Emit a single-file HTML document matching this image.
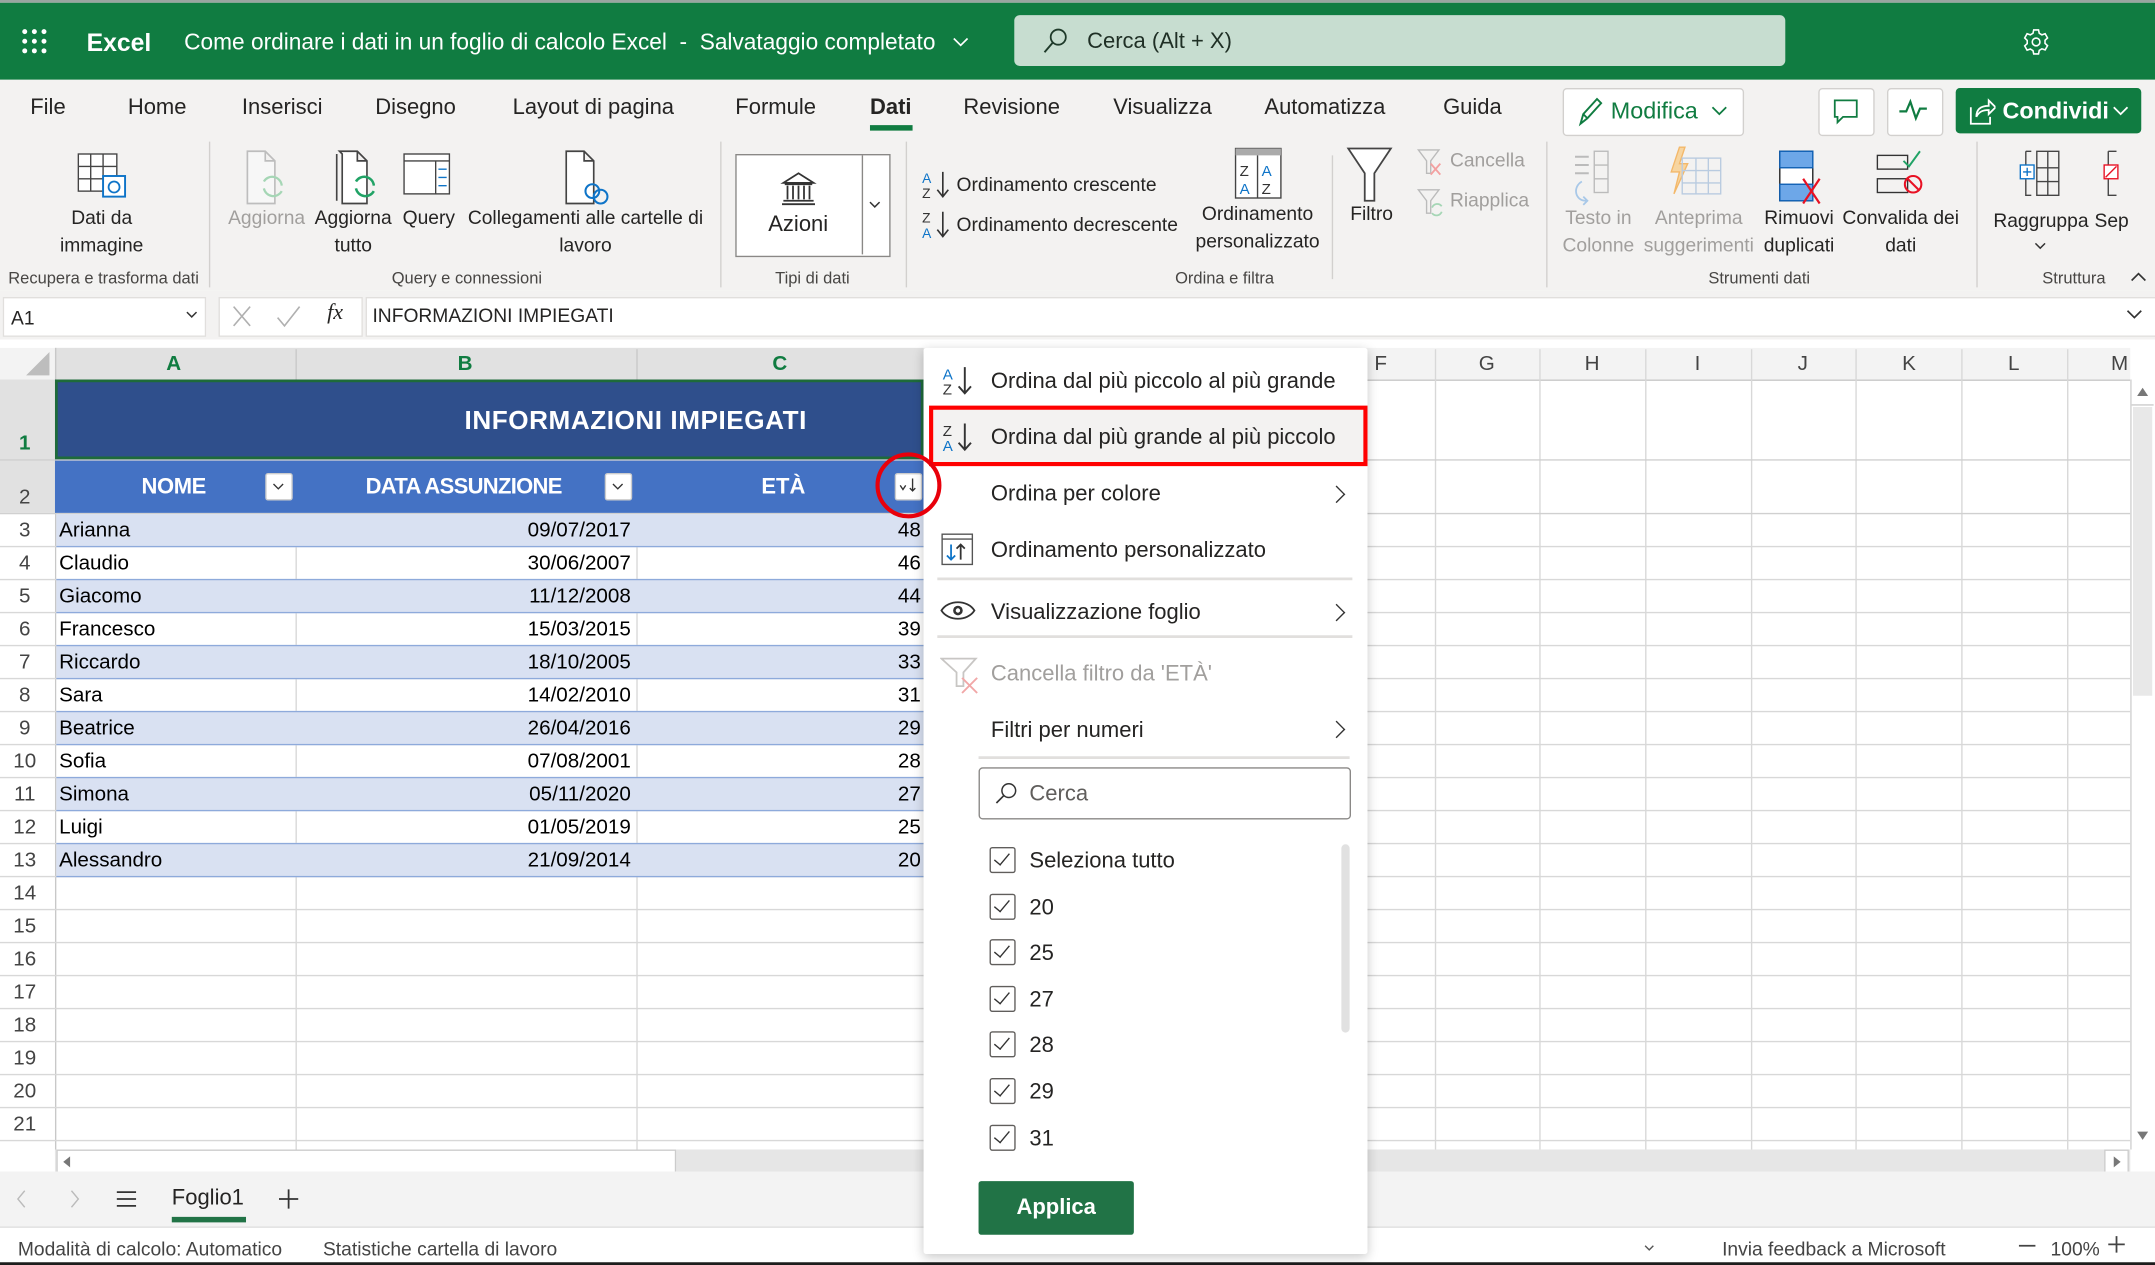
<!DOCTYPE html>
<html><head><meta charset="utf-8">
<style>
html,body{margin:0;padding:0;width:2155px;height:1265px;overflow:hidden;background:#fff}
#s{position:absolute;left:0;top:0;width:1568px;height:920px;transform:scale(1.37436,1.375);transform-origin:0 0;font-family:"Liberation Sans",sans-serif;color:#252423;background:#fff;overflow:hidden}
.a{position:absolute}
.t{position:absolute;white-space:nowrap}
.tab{position:absolute;top:70px;font-size:16px;color:#252423}
.rl{position:absolute;font-size:14px;color:#252423;text-align:center;line-height:20px}
.dis{color:#a19f9d}
.gl{position:absolute;top:195px;font-size:12px;color:#484644}
.vsep{position:absolute;top:103px;width:1px;height:106px;background:#d2d0ce}
.mi{position:absolute;left:721px;font-size:16px;color:#252423}
.chev{position:absolute;left:968px;width:8px;height:8px;border-right:1.5px solid #333;border-top:1.5px solid #333;transform:rotate(45deg)}
.cb{position:absolute;left:720px;width:17px;height:17px;border:1px solid #605e5c;border-radius:2px;background:#fff}
.cb:after{content:"";position:absolute;left:5px;top:1px;width:5px;height:10px;border-right:1.3px solid #333;border-bottom:1.3px solid #333;transform:rotate(40deg)}
.cl{position:absolute;left:749px;font-size:16px}
.rn{position:absolute;left:0;width:36px;text-align:center;font-size:15px;color:#444}
.cell{position:absolute;font-size:15px;color:#000;font-family:"Liberation Sans",sans-serif}
</style></head><body><div id="s">

<!-- top bar -->
<div class="a" style="left:0;top:0;width:1568px;height:2px;background:#9aa5a0"></div>
<div class="a" style="left:0;top:2px;width:1568px;height:56px;background:#107c41"></div>
<svg class="a" style="left:15px;top:20px" width="20" height="20"><g fill="#fff"><circle cx="3" cy="3" r="1.8"/><circle cx="10" cy="3" r="1.8"/><circle cx="17" cy="3" r="1.8"/><circle cx="3" cy="10" r="1.8"/><circle cx="10" cy="10" r="1.8"/><circle cx="17" cy="10" r="1.8"/><circle cx="3" cy="17" r="1.8"/><circle cx="10" cy="17" r="1.8"/><circle cx="17" cy="17" r="1.8"/></g></svg>
<div class="t" style="left:63px;top:21px;font-size:18px;font-weight:bold;color:#fff">Excel</div>
<div class="t" style="left:134px;top:22px;font-size:16.5px;color:#fff">Come ordinare i dati in un foglio di calcolo Excel &nbsp;-&nbsp; Salvataggio completato</div>
<svg class="a" style="left:693px;top:27px" width="12" height="8"><path d="M1 1 L6 6 L11 1" stroke="#fff" fill="none" stroke-width="1.2"/></svg>
<div class="a" style="left:738px;top:11px;width:561px;height:37px;background:#c7ddd0;border-radius:4px"></div>
<svg class="a" style="left:758px;top:20px" width="20" height="20"><circle cx="12" cy="7" r="5.5" stroke="#1f3a2a" fill="none" stroke-width="1.3"/><path d="M8 11 L2 18" stroke="#1f3a2a" stroke-width="1.4"/></svg>
<div class="t" style="left:791px;top:22px;font-size:16px;color:#1f2f25">Cerca (Alt + X)</div>
<svg class="a" style="left:1471px;top:20px" width="21" height="21" viewBox="0 0 24 24"><path d="M10 2h4l.6 2.8 2.2 1.3 2.7-.9 2 3.5-2.1 1.9v2.6l2.1 1.9-2 3.5-2.7-.9-2.2 1.3L14 22h-4l-.6-2.8-2.2-1.3-2.7.9-2-3.5 2.1-1.9v-2.6L2.5 8.7l2-3.5 2.7.9 2.2-1.3z" fill="none" stroke="#fff" stroke-width="1.3"/><circle cx="12" cy="12" r="3.2" fill="none" stroke="#fff" stroke-width="1.3"/></svg>

<!-- ribbon -->
<div class="a" style="left:0;top:58px;width:1568px;height:153px;background:#f3f2f1"></div>
<div class="tab" style="left:22px">File</div>
<div class="tab" style="left:93px">Home</div>
<div class="tab" style="left:176px">Inserisci</div>
<div class="tab" style="left:273px">Disegno</div>
<div class="tab" style="left:373px">Layout di pagina</div>
<div class="tab" style="left:535px">Formule</div>
<div class="tab" style="left:633px;font-weight:bold">Dati</div>
<div class="a" style="left:633px;top:91px;width:31px;height:4px;background:#107c41"></div>
<div class="tab" style="left:701px">Revisione</div>
<div class="tab" style="left:810px">Visualizza</div>
<div class="tab" style="left:920px">Automatizza</div>
<div class="tab" style="left:1050px">Guida</div>
<div class="a" style="left:1137px;top:64px;width:130px;height:33px;background:#fff;border:1px solid #d2d0ce;border-radius:3px"></div>
<svg class="a" style="left:1147px;top:70px" width="20" height="22"><path d="M3 20 L5 13 L15 2 L18 5 L8 16 Z M5 13 L8 16" stroke="#107c41" fill="none" stroke-width="1.4"/></svg>
<div class="t" style="left:1172px;top:71px;font-size:17px;color:#107c41">Modifica</div>
<svg class="a" style="left:1245px;top:77px" width="12" height="8"><path d="M1 1 L6 6 L11 1" stroke="#107c41" fill="none" stroke-width="1.3"/></svg>
<div class="a" style="left:1323px;top:64px;width:39px;height:33px;background:#fff;border:1px solid #d2d0ce;border-radius:3px"></div>
<svg class="a" style="left:1333px;top:71px" width="20" height="20"><path d="M2 2 H18 V14 H8 L4 18 V14 H2 Z" stroke="#107c41" fill="none" stroke-width="1.3"/></svg>
<div class="a" style="left:1373px;top:64px;width:39px;height:33px;background:#fff;border:1px solid #d2d0ce;border-radius:3px"></div>
<svg class="a" style="left:1381px;top:71px" width="22" height="18"><path d="M1 10 L6 10 L9 3 L13 15 L16 8 L21 8" stroke="#107c41" fill="none" stroke-width="1.6"/></svg>
<div class="a" style="left:1423px;top:64px;width:135px;height:33px;background:#107c41;border-radius:3px"></div>
<svg class="a" style="left:1432px;top:70px" width="20" height="22"><path d="M2 8 V20 H16 V15 M6 15 C6 9 10 7 15 7 V3 L20 8 L15 13 V10 C11 10 8 11 6 15" stroke="#fff" fill="none" stroke-width="1.3"/></svg>
<div class="t" style="left:1457px;top:71px;font-size:17px;font-weight:bold;color:#fff">Condividi</div>
<svg class="a" style="left:1537px;top:77px" width="12" height="8"><path d="M1 1 L6 6 L11 1" stroke="#fff" fill="none" stroke-width="1.3"/></svg>

<!-- ribbon buttons -->
<svg class="a" style="left:56px;top:111px" width="40" height="36"><rect x="1" y="1" width="28" height="27" fill="#fff" stroke="#444"/><path d="M1 10H29M1 19H29M10 1V28M19 1V28" stroke="#444"/><rect x="19" y="17" width="16" height="15" fill="#fff" stroke="#0e74c8" stroke-width="1.4"/><circle cx="27" cy="25" r="4" fill="none" stroke="#0e74c8" stroke-width="1.3"/></svg>
<div class="rl" style="left:30px;top:148px;width:88px">Dati da<br>immagine</div>
<div class="vsep" style="left:152px"></div>
<svg class="a" style="left:178px;top:108px" width="32" height="44"><path d="M2 2H15L22 9V40H2Z M15 2V9H22" stroke="#bdbdbd" fill="#f7f7f7" stroke-width="1.2"/><path d="M14 24 A7 7 0 0 1 27 27 M27 31 A7 7 0 0 1 14 29" stroke="#a5d6b5" fill="none" stroke-width="1.6"/></svg>
<div class="rl dis" style="left:164px;top:148px;width:60px">Aggiorna</div>
<svg class="a" style="left:243px;top:108px" width="34" height="44"><path d="M2 4V38 M4 2H17L24 9V40H6V4Z M17 2V9H24" stroke="#444" fill="#fff" stroke-width="1.2"/><path d="M16 24 A7 7 0 0 1 29 27 M29 31 A7 7 0 0 1 16 29" stroke="#21a366" fill="none" stroke-width="1.8"/></svg>
<div class="rl" style="left:226px;top:148px;width:62px">Aggiorna<br>tutto</div>
<svg class="a" style="left:293px;top:111px" width="36" height="32"><rect x="1" y="1" width="33" height="29" fill="#fff" stroke="#444"/><path d="M1 6H34 M24 6V30" stroke="#444"/><path d="M26 12h6M26 18h6M26 24h6" stroke="#0e74c8"/></svg>
<div class="rl" style="left:290px;top:148px;width:44px">Query</div>
<svg class="a" style="left:410px;top:108px" width="36" height="44"><path d="M2 2H15L22 9V40H2Z M15 2V9H22" stroke="#444" fill="#fff" stroke-width="1.2"/><circle cx="21" cy="31" r="5" fill="none" stroke="#0e74c8" stroke-width="1.5"/><circle cx="27" cy="35" r="5" fill="none" stroke="#0e74c8" stroke-width="1.5"/></svg>
<div class="rl" style="left:336px;top:148px;width:180px">Collegamenti alle cartelle di<br>lavoro</div>
<div class="gl" style="left:6px">Recupera e trasforma dati</div>
<div class="gl" style="left:285px">Query e connessioni</div>
<div class="vsep" style="left:524px"></div>
<div class="a" style="left:535px;top:112px;width:111px;height:73px;background:#fff;border:1px solid #8a8886"></div>
<div class="a" style="left:627px;top:113px;width:1px;height:72px;background:#8a8886"></div>
<svg class="a" style="left:567px;top:124px" width="28" height="26"><path d="M3 9 L14 2 L25 9 Z M4 10H24 M6 11V21 M10 11V21 M14 11V21 M18 11V21 M22 11V21 M3 22H25 M2 24.5H26" stroke="#333" fill="none" stroke-width="1.3"/></svg>
<div class="t" style="left:559px;top:155px;font-size:16px">Azioni</div>
<svg class="a" style="left:632px;top:146px" width="9" height="6"><path d="M1 1 L4.5 4.5 L8 1" stroke="#333" fill="none" stroke-width="1.1"/></svg>
<div class="gl" style="left:564px">Tipi di dati</div>
<div class="vsep" style="left:659px"></div>
<svg class="a" style="left:670px;top:123px" width="24" height="22"><text x="1" y="10" font-size="10" fill="#0e74c8" font-family="Liberation Sans">A</text><text x="1" y="21" font-size="10" fill="#333" font-family="Liberation Sans">Z</text><path d="M16 2V19 M12 15 L16 20 L20 15" stroke="#333" fill="none" stroke-width="1.2"/></svg>
<div class="t" style="left:696px;top:126px;font-size:14px">Ordinamento crescente</div>
<svg class="a" style="left:670px;top:152px" width="24" height="22"><text x="1" y="10" font-size="10" fill="#333" font-family="Liberation Sans">Z</text><text x="1" y="21" font-size="10" fill="#0e74c8" font-family="Liberation Sans">A</text><path d="M16 2V19 M12 15 L16 20 L20 15" stroke="#333" fill="none" stroke-width="1.2"/></svg>
<div class="t" style="left:696px;top:155px;font-size:14px">Ordinamento decrescente</div>
<svg class="a" style="left:897px;top:106px" width="38" height="40"><rect x="2" y="2" width="33" height="36" fill="#fff" stroke="#444"/><rect x="2" y="2" width="33" height="5" fill="#aaa"/><path d="M18 7V38" stroke="#444"/><text x="5" y="22" font-size="11" fill="#333" font-family="Liberation Sans">Z</text><text x="5" y="35" font-size="11" fill="#0e74c8" font-family="Liberation Sans">A</text><text x="21" y="22" font-size="11" fill="#0e74c8" font-family="Liberation Sans">A</text><text x="21" y="35" font-size="11" fill="#333" font-family="Liberation Sans">Z</text></svg>
<div class="rl" style="left:865px;top:145px;width:100px">Ordinamento<br>personalizzato</div>
<div class="vsep" style="left:969px;top:113px;height:90px"></div>
<svg class="a" style="left:979px;top:106px" width="36" height="44"><path d="M2 2H33L21 20V40H14V20Z" fill="#fff" stroke="#444" stroke-width="1.3"/></svg>
<div class="rl" style="left:978px;top:145px;width:40px">Filtro</div>
<svg class="a" style="left:1030px;top:107px" width="22" height="22"><path d="M2 2H17L11 10V19H8V10Z" stroke="#bbb" fill="none"/><path d="M11 12 L18 20 M18 12 L11 20" stroke="#f3a0a0" stroke-width="1.3"/></svg>
<div class="t dis" style="left:1055px;top:108px;font-size:14px">Cancella</div>
<svg class="a" style="left:1030px;top:136px" width="22" height="22"><path d="M2 2H17L11 10V19H8V10Z" stroke="#bbb" fill="none"/><path d="M12 15 A4 4 0 0 1 19 14 M19 18 A4 4 0 0 1 12 19" stroke="#a5d6b5" fill="none" stroke-width="1.3"/></svg>
<div class="t dis" style="left:1055px;top:137px;font-size:14px">Riapplica</div>
<div class="gl" style="left:855px">Ordina e filtra</div>
<div class="vsep" style="left:1125px"></div>
<svg class="a" style="left:1142px;top:108px" width="40" height="44"><path d="M4 6H14 M4 12H14 M4 18H14" stroke="#bbb" stroke-width="1.5"/><rect x="18" y="2" width="10" height="30" fill="none" stroke="#bbb"/><path d="M18 12H28M18 22H28" stroke="#bbb"/><path d="M9 24 C2 28 4 38 12 38 M10 35 L13 38 L10 41" stroke="#a8c8e8" fill="none" stroke-width="1.3"/></svg>
<div class="rl dis" style="left:1133px;top:148px;width:60px">Testo in<br>Colonne</div>
<svg class="a" style="left:1212px;top:105px" width="44" height="40"><path d="M10 2 L4 20 L10 20 L6 36 L16 14 L10 14 L14 2Z" fill="#f7d5a0" stroke="#f3b86a"/><rect x="12" y="10" width="28" height="26" fill="none" stroke="#b9cbe0"/><path d="M12 19H40M12 28H40M22 10V36M31 10V36" stroke="#b9cbe0"/></svg>
<div class="rl dis" style="left:1196px;top:148px;width:80px">Anteprima<br>suggerimenti</div>
<svg class="a" style="left:1292px;top:108px" width="36" height="42"><rect x="3" y="2" width="24" height="36" fill="#fff" stroke="#222"/><rect x="3" y="2" width="24" height="12" fill="#6da7e8" stroke="#0e5fb3"/><rect x="3" y="26" width="24" height="12" fill="#6da7e8" stroke="#0e5fb3"/><path d="M20 22 L32 40 M32 22 L20 40" stroke="#e81123" stroke-width="1.6"/></svg>
<div class="rl" style="left:1279px;top:148px;width:60px">Rimuovi<br>duplicati</div>
<svg class="a" style="left:1362px;top:108px" width="42" height="36"><rect x="4" y="5" width="22" height="10" fill="none" stroke="#333"/><rect x="4" y="22" width="22" height="10" fill="none" stroke="#333"/><path d="M23 9 L27 13 L35 2" stroke="#21a366" fill="none" stroke-width="1.4"/><circle cx="30" cy="26" r="6" fill="none" stroke="#e81123" stroke-width="1.5"/><path d="M26 22 L34 30" stroke="#e81123" stroke-width="1.5"/></svg>
<div class="rl" style="left:1336px;top:148px;width:94px">Convalida dei<br>dati</div>
<div class="gl" style="left:1243px">Strumenti dati</div>
<div class="vsep" style="left:1438px"></div>
<svg class="a" style="left:1468px;top:108px" width="34" height="36"><path d="M6 2H10 M6 2V34H10 M14 2H30V34H14Z M14 14H30M14 24H30 M22 2V34" stroke="#444" fill="none"/><rect x="2" y="12" width="10" height="10" fill="#fff" stroke="#0e74c8"/><path d="M7 14V20 M4 17H10" stroke="#0e74c8"/></svg>
<div class="rl" style="left:1448px;top:150px;width:74px">Raggruppa</div>
<svg class="a" style="left:1480px;top:176px" width="9" height="6"><path d="M1 1 L4.5 4.5 L8 1" stroke="#333" fill="none" stroke-width="1.1"/></svg>
<svg class="a" style="left:1528px;top:108px" width="20" height="36"><path d="M6 2H12 M6 2V34H12" stroke="#444" fill="none"/><rect x="3" y="12" width="10" height="10" fill="#fff" stroke="#e81123"/><path d="M4 21 L12 13" stroke="#e81123"/></svg>
<div class="t" style="left:1524px;top:152px;font-size:14px">Sep</div>
<div class="gl" style="left:1486px">Struttura</div>
<svg class="a" style="left:1550px;top:197px" width="12" height="8"><path d="M1 7 L6 2 L11 7" stroke="#333" fill="none" stroke-width="1.2"/></svg>

<!-- formula bar -->
<div class="a" style="left:0;top:211px;width:1568px;height:36px;background:#f3f2f1"></div>
<div class="a" style="left:2px;top:216px;width:146px;height:27px;background:#fff;border:1px solid #e1dfdd"></div>
<div class="t" style="left:8px;top:223px;font-size:14px">A1</div>
<svg class="a" style="left:135px;top:226px" width="9" height="6"><path d="M1 1 L4.5 4.5 L8 1" stroke="#333" fill="none" stroke-width="1.1"/></svg>
<div class="a" style="left:159px;top:216px;width:103px;height:27px;background:#fff;border:1px solid #e1dfdd"></div>
<svg class="a" style="left:168px;top:220px" width="90" height="20"><path d="M2 3 L14 17 M14 3 L2 17" stroke="#b0b0b0" stroke-width="1.2"/><path d="M34 11 L39 17 L50 3" stroke="#b0b0b0" fill="none" stroke-width="1.2"/></svg>
<div class="t" style="left:238px;top:219px;font-size:16px;font-style:italic;font-family:'Liberation Serif',serif">fx</div>
<div class="a" style="left:266px;top:216px;width:1302px;height:27px;background:#fff;border:1px solid #e1dfdd"></div>
<div class="t" style="left:271px;top:221px;font-size:14px">INFORMAZIONI IMPIEGATI</div>
<svg class="a" style="left:1547px;top:225px" width="12" height="8"><path d="M1 1 L6 6 L11 1" stroke="#333" fill="none" stroke-width="1.2"/></svg>

<!-- grid area -->
<div class="a" style="left:0;top:247px;width:1568px;height:605px;background:#fff"></div>
<div class="a" style="left:0;top:253px;width:1550px;height:23px;background:#f3f3f3;border-bottom:1px solid #c8c8c8"></div>
<div class="a" style="left:40px;top:253px;width:632px;height:23px;background:#e1e1e1"></div>
<svg class="a" style="left:18px;top:256px" width="20" height="18"><path d="M18 0 V17 H1 Z" fill="#bdbdbd"/></svg>
<div class="a" style="left:0;top:276px;width:40px;height:97px;background:#e1e1e1"></div>
<div class="a" style="left:40px;top:253px;width:1px;height:588px;background:#c8c8c8"></div>
<div class="t" style="left:121px;top:256px;font-size:15px;font-weight:bold;color:#107c41">A</div>
<div class="t" style="left:333px;top:256px;font-size:15px;font-weight:bold;color:#107c41">B</div>
<div class="t" style="left:562px;top:256px;font-size:15px;font-weight:bold;color:#107c41">C</div>
<div class="a" style="left:215px;top:254px;width:1px;height:22px;background:#c8c8c8"></div>
<div class="a" style="left:463px;top:254px;width:1px;height:22px;background:#c8c8c8"></div>
<div class="t" style="left:1000px;top:256px;font-size:15px;color:#444">F</div>
<div class="t" style="left:1076px;top:256px;font-size:15px;color:#444">G</div>
<div class="t" style="left:1153px;top:256px;font-size:15px;color:#444">H</div>
<div class="t" style="left:1233px;top:256px;font-size:15px;color:#444">I</div>
<div class="t" style="left:1308px;top:256px;font-size:15px;color:#444">J</div>
<div class="t" style="left:1384px;top:256px;font-size:15px;color:#444">K</div>
<div class="t" style="left:1461px;top:256px;font-size:15px;color:#444">L</div>
<div class="t" style="left:1536px;top:256px;font-size:15px;color:#444">M</div>
<div class="a" style="left:1044px;top:254px;width:1px;height:582px;background:#d8d8d8"></div>
<div class="a" style="left:1120px;top:254px;width:1px;height:582px;background:#d8d8d8"></div>
<div class="a" style="left:1197px;top:254px;width:1px;height:582px;background:#d8d8d8"></div>
<div class="a" style="left:1274px;top:254px;width:1px;height:582px;background:#d8d8d8"></div>
<div class="a" style="left:1350px;top:254px;width:1px;height:582px;background:#d8d8d8"></div>
<div class="a" style="left:1427px;top:254px;width:1px;height:582px;background:#d8d8d8"></div>
<div class="a" style="left:1504px;top:254px;width:1px;height:582px;background:#d8d8d8"></div>
<div class="a" style="left:0;top:334px;width:1550px;height:1px;background:#d0d0d0"></div>
<div class="a" style="left:0;top:373px;width:1550px;height:1px;background:#d0d0d0"></div>
<div class="a" style="left:0;top:397px;width:1550px;height:1px;background:#d8d8d8"></div>
<div class="a" style="left:0;top:421px;width:1550px;height:1px;background:#d8d8d8"></div>
<div class="a" style="left:0;top:445px;width:1550px;height:1px;background:#d8d8d8"></div>
<div class="a" style="left:0;top:469px;width:1550px;height:1px;background:#d8d8d8"></div>
<div class="a" style="left:0;top:493px;width:1550px;height:1px;background:#d8d8d8"></div>
<div class="a" style="left:0;top:517px;width:1550px;height:1px;background:#d8d8d8"></div>
<div class="a" style="left:0;top:541px;width:1550px;height:1px;background:#d8d8d8"></div>
<div class="a" style="left:0;top:565px;width:1550px;height:1px;background:#d8d8d8"></div>
<div class="a" style="left:0;top:589px;width:1550px;height:1px;background:#d8d8d8"></div>
<div class="a" style="left:0;top:613px;width:1550px;height:1px;background:#d8d8d8"></div>
<div class="a" style="left:0;top:637px;width:1550px;height:1px;background:#d8d8d8"></div>
<div class="a" style="left:0;top:661px;width:1550px;height:1px;background:#d8d8d8"></div>
<div class="a" style="left:0;top:685px;width:1550px;height:1px;background:#d8d8d8"></div>
<div class="a" style="left:0;top:709px;width:1550px;height:1px;background:#d8d8d8"></div>
<div class="a" style="left:0;top:733px;width:1550px;height:1px;background:#d8d8d8"></div>
<div class="a" style="left:0;top:757px;width:1550px;height:1px;background:#d8d8d8"></div>
<div class="a" style="left:0;top:781px;width:1550px;height:1px;background:#d8d8d8"></div>
<div class="a" style="left:0;top:805px;width:1550px;height:1px;background:#d8d8d8"></div>
<div class="a" style="left:0;top:829px;width:1550px;height:1px;background:#d8d8d8"></div>
<div class="a" style="left:215px;top:637px;width:1px;height:200px;background:#d8d8d8"></div>
<div class="a" style="left:463px;top:637px;width:1px;height:200px;background:#d8d8d8"></div>

<!-- table -->
<div class="a" style="left:40px;top:276px;width:632px;height:58px;background:#2f4f8c;box-shadow:inset 0 0 0 2px #1e6b3a"></div>
<div class="t" style="left:338px;top:296px;font-size:19px;font-weight:bold;color:#fff;letter-spacing:0.4px">INFORMAZIONI IMPIEGATI</div>
<div class="a" style="left:40px;top:335px;width:632px;height:38px;background:#4472c4"></div>
<div class="t" style="left:103px;top:346px;font-size:16px;font-weight:bold;color:#fff;letter-spacing:-0.3px">NOME</div>
<div class="t" style="left:266px;top:346px;font-size:16px;font-weight:bold;color:#fff;letter-spacing:-0.5px">DATA ASSUNZIONE</div>
<div class="t" style="left:554px;top:346px;font-size:16px;font-weight:bold;color:#fff">ETÀ</div>
<div class="a" style="left:193px;top:344px;width:18px;height:18px;background:#fff;border:1px solid #ccc;border-radius:2px"></div>
<svg class="a" style="left:198px;top:351px" width="9" height="6"><path d="M1 1 L4.5 4.5 L8 1" stroke="#333" fill="none"/></svg>
<div class="a" style="left:440px;top:344px;width:18px;height:18px;background:#fff;border:1px solid #ccc;border-radius:2px"></div>
<svg class="a" style="left:445px;top:351px" width="9" height="6"><path d="M1 1 L4.5 4.5 L8 1" stroke="#333" fill="none"/></svg>
<div class="a" style="left:651px;top:344px;width:18px;height:18px;background:#fff;border:1px solid #ccc;border-radius:2px"></div>
<svg class="a" style="left:653px;top:346px" width="16" height="14"><path d="M2 7 L4 10 L6 7" stroke="#333" fill="none"/><path d="M11 2V11 M9 9 L11 11 L13 9" stroke="#333" fill="none"/></svg>

<div class="a" style="left:41px;top:374px;width:631px;height:23px;background:#d9e1f2"></div>
<div class="a" style="left:41px;top:422px;width:631px;height:23px;background:#d9e1f2"></div>
<div class="a" style="left:41px;top:470px;width:631px;height:23px;background:#d9e1f2"></div>
<div class="a" style="left:41px;top:518px;width:631px;height:23px;background:#d9e1f2"></div>
<div class="a" style="left:41px;top:566px;width:631px;height:23px;background:#d9e1f2"></div>
<div class="a" style="left:41px;top:614px;width:631px;height:23px;background:#d9e1f2"></div>
<div class="a" style="left:41px;top:398px;width:631px;height:23px;background:#fff"></div>
<div class="a" style="left:41px;top:446px;width:631px;height:23px;background:#fff"></div>
<div class="a" style="left:41px;top:494px;width:631px;height:23px;background:#fff"></div>
<div class="a" style="left:41px;top:542px;width:631px;height:23px;background:#fff"></div>
<div class="a" style="left:41px;top:590px;width:631px;height:23px;background:#fff"></div>
<div class="a" style="left:215px;top:398px;width:1px;height:23px;background:#d8d8d8"></div>
<div class="a" style="left:463px;top:398px;width:1px;height:23px;background:#d8d8d8"></div>
<div class="a" style="left:215px;top:446px;width:1px;height:23px;background:#d8d8d8"></div>
<div class="a" style="left:463px;top:446px;width:1px;height:23px;background:#d8d8d8"></div>
<div class="a" style="left:215px;top:494px;width:1px;height:23px;background:#d8d8d8"></div>
<div class="a" style="left:463px;top:494px;width:1px;height:23px;background:#d8d8d8"></div>
<div class="a" style="left:215px;top:542px;width:1px;height:23px;background:#d8d8d8"></div>
<div class="a" style="left:463px;top:542px;width:1px;height:23px;background:#d8d8d8"></div>
<div class="a" style="left:215px;top:590px;width:1px;height:23px;background:#d8d8d8"></div>
<div class="a" style="left:463px;top:590px;width:1px;height:23px;background:#d8d8d8"></div>
<div class="a" style="left:41px;top:397px;width:631px;height:1px;background:#8eaadb"></div>
<div class="a" style="left:41px;top:421px;width:631px;height:1px;background:#8eaadb"></div>
<div class="a" style="left:41px;top:445px;width:631px;height:1px;background:#8eaadb"></div>
<div class="a" style="left:41px;top:469px;width:631px;height:1px;background:#8eaadb"></div>
<div class="a" style="left:41px;top:493px;width:631px;height:1px;background:#8eaadb"></div>
<div class="a" style="left:41px;top:517px;width:631px;height:1px;background:#8eaadb"></div>
<div class="a" style="left:41px;top:541px;width:631px;height:1px;background:#8eaadb"></div>
<div class="a" style="left:41px;top:565px;width:631px;height:1px;background:#8eaadb"></div>
<div class="a" style="left:41px;top:589px;width:631px;height:1px;background:#8eaadb"></div>
<div class="a" style="left:41px;top:613px;width:631px;height:1px;background:#8eaadb"></div>
<div class="a" style="left:41px;top:637px;width:631px;height:1px;background:#8eaadb"></div>

<!-- row numbers -->
<div class="rn" style="top:314px;color:#107c41;font-weight:bold">1</div>
<div class="rn" style="top:353px">2</div>
<div class="rn" style="top:377px">3</div><div class="rn" style="top:401px">4</div><div class="rn" style="top:425px">5</div><div class="rn" style="top:449px">6</div><div class="rn" style="top:473px">7</div><div class="rn" style="top:497px">8</div><div class="rn" style="top:521px">9</div><div class="rn" style="top:545px">10</div><div class="rn" style="top:569px">11</div><div class="rn" style="top:593px">12</div><div class="rn" style="top:617px">13</div><div class="rn" style="top:641px">14</div><div class="rn" style="top:665px">15</div><div class="rn" style="top:689px">16</div><div class="rn" style="top:713px">17</div><div class="rn" style="top:737px">18</div><div class="rn" style="top:761px">19</div><div class="rn" style="top:785px">20</div><div class="rn" style="top:809px">21</div>

<!-- cells -->
<div class="cell" style="left:43px;top:377px">Arianna</div><div class="cell" style="right:1109px;top:377px">09/07/2017</div><div class="cell" style="right:898px;top:377px">48</div>
<div class="cell" style="left:43px;top:401px">Claudio</div><div class="cell" style="right:1109px;top:401px">30/06/2007</div><div class="cell" style="right:898px;top:401px">46</div>
<div class="cell" style="left:43px;top:425px">Giacomo</div><div class="cell" style="right:1109px;top:425px">11/12/2008</div><div class="cell" style="right:898px;top:425px">44</div>
<div class="cell" style="left:43px;top:449px">Francesco</div><div class="cell" style="right:1109px;top:449px">15/03/2015</div><div class="cell" style="right:898px;top:449px">39</div>
<div class="cell" style="left:43px;top:473px">Riccardo</div><div class="cell" style="right:1109px;top:473px">18/10/2005</div><div class="cell" style="right:898px;top:473px">33</div>
<div class="cell" style="left:43px;top:497px">Sara</div><div class="cell" style="right:1109px;top:497px">14/02/2010</div><div class="cell" style="right:898px;top:497px">31</div>
<div class="cell" style="left:43px;top:521px">Beatrice</div><div class="cell" style="right:1109px;top:521px">26/04/2016</div><div class="cell" style="right:898px;top:521px">29</div>
<div class="cell" style="left:43px;top:545px">Sofia</div><div class="cell" style="right:1109px;top:545px">07/08/2001</div><div class="cell" style="right:898px;top:545px">28</div>
<div class="cell" style="left:43px;top:569px">Simona</div><div class="cell" style="right:1109px;top:569px">05/11/2020</div><div class="cell" style="right:898px;top:569px">27</div>
<div class="cell" style="left:43px;top:593px">Luigi</div><div class="cell" style="right:1109px;top:593px">01/05/2019</div><div class="cell" style="right:898px;top:593px">25</div>
<div class="cell" style="left:43px;top:617px">Alessandro</div><div class="cell" style="right:1109px;top:617px">21/09/2014</div><div class="cell" style="right:898px;top:617px">20</div>

<!-- scrollbars -->
<div class="a" style="left:1550px;top:276px;width:18px;height:560px;background:#fff;border-left:1px solid #d0d0d0"></div>
<div class="a" style="left:1551px;top:277px;width:16px;height:17px;border-bottom:1px solid #ccc"></div>
<svg class="a" style="left:1554px;top:281px" width="10" height="8"><path d="M1 7 L5 1 L9 7Z" fill="#777"/></svg>
<div class="a" style="left:1552px;top:296px;width:14px;height:210px;background:#e8e8e8"></div>
<svg class="a" style="left:1554px;top:822px" width="10" height="8"><path d="M1 1 L5 7 L9 1Z" fill="#777"/></svg>
<div class="a" style="left:40px;top:836px;width:1510px;height:16px;background:#e6e6e6"></div>
<div class="a" style="left:41px;top:836px;width:449px;height:15px;background:#fff;border:1px solid #ccc"></div>
<svg class="a" style="left:45px;top:840px" width="8" height="10"><path d="M6 1 L1 5 L6 9Z" fill="#777"/></svg>
<div class="a" style="left:1531px;top:836px;width:16px;height:15px;background:#fff;border:1px solid #ccc"></div>
<svg class="a" style="left:1536px;top:840px" width="8" height="10"><path d="M2 1 L7 5 L2 9Z" fill="#777"/></svg>

<!-- sheet tabs -->
<div class="a" style="left:0;top:852px;width:1568px;height:40px;background:#f3f3f3;border-bottom:1px solid #ddd"></div>
<svg class="a" style="left:10px;top:864px" width="60" height="16"><path d="M8 2 L3 8 L8 14" stroke="#bbb" fill="none"/><path d="M42 2 L47 8 L42 14" stroke="#bbb" fill="none"/></svg>
<svg class="a" style="left:84px;top:865px" width="16" height="14"><path d="M1 2H15M1 7H15M1 12H15" stroke="#333" stroke-width="1.3"/></svg>
<div class="t" style="left:125px;top:863px;font-size:16px;color:#252423">Foglio1</div>
<div class="a" style="left:125px;top:885px;width:54px;height:4px;background:#217346"></div>
<svg class="a" style="left:202px;top:864px" width="16" height="16"><path d="M8 1V15M1 8H15" stroke="#333" stroke-width="1.3"/></svg>

<!-- status bar -->
<div class="a" style="left:0;top:893px;width:1568px;height:25px;background:#fff"></div>
<div class="t" style="left:13px;top:900px;font-size:14px;color:#444">Modalità di calcolo: Automatico</div>
<div class="t" style="left:235px;top:900px;font-size:14px;color:#444">Statistiche cartella di lavoro</div>
<svg class="a" style="left:1196px;top:905px" width="8" height="6"><path d="M1 1 L4 4 L7 1" stroke="#555" fill="none"/></svg>
<div class="t" style="left:1253px;top:900px;font-size:14px;color:#444">Invia feedback a Microsoft</div>
<svg class="a" style="left:1468px;top:899px" width="14" height="14"><path d="M1 7H13" stroke="#444" stroke-width="1.3"/></svg>
<div class="t" style="left:1492px;top:900px;font-size:14px;color:#444">100%</div>
<svg class="a" style="left:1533px;top:898px" width="14" height="14"><path d="M7 1V13M1 7H13" stroke="#444" stroke-width="1.3"/></svg>
<div class="a" style="left:0;top:918px;width:1568px;height:2px;background:#1d1d1d"></div>

<!-- dropdown menu -->
<div class="a" style="left:672px;top:253px;width:323px;height:659px;background:#fff;box-shadow:0 2px 8px rgba(0,0,0,0.22);border-radius:2px"></div>
<svg class="a" style="left:685px;top:265px" width="26" height="24"><text x="1" y="11" font-size="11" fill="#0e74c8" font-family="Liberation Sans">A</text><text x="1" y="22" font-size="11" fill="#333" font-family="Liberation Sans">Z</text><path d="M17 2V21 M12.5 16 L17 21 L21.5 16" stroke="#333" fill="none" stroke-width="1.4"/></svg>
<div class="mi" style="top:269px">Ordina dal più piccolo al più grande</div>
<div class="a" style="left:676px;top:295px;width:313px;height:38px;background:#f3f2f1;border:3px solid #ff0000"></div>
<svg class="a" style="left:685px;top:306px" width="26" height="24"><text x="1" y="11" font-size="11" fill="#333" font-family="Liberation Sans">Z</text><text x="1" y="22" font-size="11" fill="#0e74c8" font-family="Liberation Sans">A</text><path d="M17 2V21 M12.5 16 L17 21 L21.5 16" stroke="#333" fill="none" stroke-width="1.4"/></svg>
<div class="mi" style="top:310px">Ordina dal più grande al più piccolo</div>
<div class="mi" style="top:351px">Ordina per colore</div>
<div class="chev" style="top:355px"></div>
<svg class="a" style="left:684px;top:387px" width="26" height="26"><rect x="1.5" y="1.5" width="22" height="22" fill="#fff" stroke="#555"/><path d="M1.5 5H23.5" stroke="#555"/><path d="M8 9V20 M5 17 L8 20 L11 17" stroke="#0e74c8" fill="none" stroke-width="1.3"/><path d="M15 9V20 M12 12 L15 9 L18 12" stroke="#333" fill="none" stroke-width="1.3"/></svg>
<div class="mi" style="top:392px">Ordinamento personalizzato</div>
<div class="a" style="left:682px;top:420px;width:302px;height:2px;background:#e1dfdd"></div>
<svg class="a" style="left:684px;top:435px" width="26" height="18"><path d="M1 9 C6 1 20 1 25 9 C20 17 6 17 1 9Z" fill="none" stroke="#333" stroke-width="1.3"/><circle cx="13" cy="9" r="3.5" fill="#333"/><circle cx="13" cy="9" r="1.6" fill="#fff"/></svg>
<div class="mi" style="top:437px">Visualizzazione foglio</div>
<div class="chev" style="top:441px"></div>
<div class="a" style="left:682px;top:462px;width:302px;height:2px;background:#e1dfdd"></div>
<svg class="a" style="left:684px;top:477px" width="28" height="28"><path d="M1 2H26L17 12V22H12V12Z" fill="none" stroke="#c8c6c4" stroke-width="1.3"/><path d="M16 16 L27 27 M27 16 L16 27" stroke="#f1a7a7" stroke-width="1.4"/></svg>
<div class="mi" style="top:482px;color:#a19f9d">Cancella filtro da 'ETÀ'</div>
<div class="mi" style="top:523px">Filtri per numeri</div>
<div class="chev" style="top:526px"></div>
<div class="a" style="left:712px;top:550px;width:270px;height:2px;background:#e1dfdd"></div>
<div class="a" style="left:712px;top:558px;width:269px;height:36px;border:1px solid #8a8886;border-radius:3px;background:#fff"></div>
<svg class="a" style="left:723px;top:568px" width="20" height="20"><circle cx="11" cy="7" r="5" stroke="#333" fill="none" stroke-width="1.1"/><path d="M7.5 10.5 L2 16" stroke="#333" stroke-width="1.2"/></svg>
<div class="t" style="left:749px;top:569px;font-size:16px;color:#605e5c">Cerca</div>
<div class="a" style="left:976px;top:614px;width:6px;height:137px;background:#e1e1e1;border-radius:3px"></div>
<div class="cb" style="top:616px"></div><div class="cl" style="top:618px">Seleziona tutto</div>
<div class="cb" style="top:650px"></div><div class="cl" style="top:652px">20</div>
<div class="cb" style="top:683px"></div><div class="cl" style="top:685px">25</div>
<div class="cb" style="top:717px"></div><div class="cl" style="top:719px">27</div>
<div class="cb" style="top:750px"></div><div class="cl" style="top:752px">28</div>
<div class="cb" style="top:784px"></div><div class="cl" style="top:786px">29</div>
<div class="cb" style="top:818px"></div><div class="cl" style="top:820px">31</div>
<div class="a" style="left:712px;top:859px;width:113px;height:39px;background:#217346;border-radius:2px"></div>
<div class="t" style="left:712px;top:870px;width:113px;text-align:center;font-size:16px;font-weight:bold;color:#fff">Applica</div>

<!-- red circle on top -->
<div class="a" style="left:637px;top:329px;width:42px;height:42px;border:3.5px solid #e8000b;border-radius:50%"></div>

</div></body></html>
